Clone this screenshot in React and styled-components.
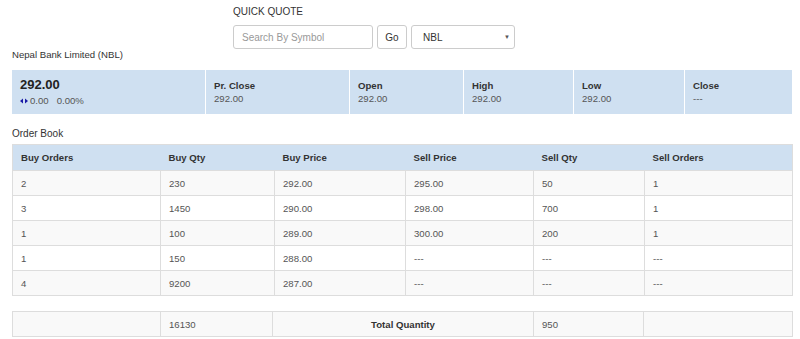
import React from 'react';
import styled, { createGlobalStyle } from 'styled-components';

const GlobalStyle = createGlobalStyle`
  body {
    margin: 0;
    background: #fff;
    font-family: "Liberation Sans", Arial, sans-serif;
    color: #333;
  }
`;

const Page = styled.div`
  width: 780px;
  padding: 6px 8px 0 12px;
`;

const QuickQuote = styled.div`
  padding-left: 221px;
`;

const QuoteTitle = styled.div`
  font-size: 10px;
  line-height: 12px;
  color: #333;
`;

const QuoteForm = styled.div`
  display: flex;
  gap: 4px;
  margin-top: 7px;
  height: 24px;
`;

const SearchInput = styled.input`
  box-sizing: border-box;
  width: 140px;
  height: 24px;
  border: 1px solid #ccc;
  border-radius: 3px;
  padding: 0 8px;
  font-family: inherit;
  font-size: 10px;
  color: #555;
  outline: none;
  &::placeholder { color: #999; }
`;

const GoButton = styled.button`
  box-sizing: border-box;
  width: 30px;
  height: 24px;
  border: 1px solid #ccc;
  border-radius: 3px;
  background: #fff;
  font-family: inherit;
  font-size: 10px;
  color: #333;
  padding: 0;
`;

const FakeSelect = styled.div`
  box-sizing: border-box;
  width: 104px;
  height: 24px;
  border: 1px solid #ccc;
  border-radius: 3px;
  display: flex;
  align-items: center;
  justify-content: space-between;
  padding: 0 4px 0 11px;
  font-size: 10px;
  color: #333;
`;

const Caret = styled.span`
  font-size: 6px;
  color: #555;
`;

const CompanyName = styled.div`
  font-size: 9.6px;
  line-height: 12px;
  margin-bottom: 9px;
`;

const SummaryBar = styled.div`
  display: flex;
  height: 44px;
  background: #cfe0f1;
`;

const SummaryCell = styled.div`
  box-sizing: border-box;
  width: ${p => p.w}px;
  padding-left: 8px;
  display: flex;
  flex-direction: column;
  justify-content: center;
  & + & { border-left: 1px solid #fff; }
`;

const Price = styled.div`
  font-size: 13px;
  font-weight: bold;
  line-height: 16px;
  color: #222;
`;

const Change = styled.div`
  display: flex;
  align-items: center;
  gap: 2px;
  font-size: 9.6px;
  line-height: 14px;
  color: #555;
  margin-top: 1px;
`;

const Label = styled.div`
  font-size: 9.6px;
  font-weight: bold;
  line-height: 13px;
  color: #333;
`;

const Value = styled.div`
  font-size: 9.6px;
  line-height: 13px;
  color: #555;
`;

const SectionTitle = styled.div`
  font-size: 10px;
  line-height: 14px;
  margin-top: 13px;
  margin-bottom: 3px;
`;

const Table = styled.table`
  width: 780px;
  border-collapse: collapse;
  table-layout: fixed;
  border: 1px solid #ddd;
  margin-top: ${p => p.mt || 0}px;
  font-size: 9.6px;
  color: #555;
`;

const Th = styled.th`
  background: #cfe0f1;
  height: 25px;
  padding: 0 8px;
  text-align: left;
  font-weight: bold;
  color: #333;
`;

const Row = styled.tr`
  background: ${p => (p.striped ? '#f9f9f9' : '#fff')};
`;

const Td = styled.td`
  height: 24px;
  padding: 0 8px;
  border: 1px solid #ddd;
  text-align: ${p => (p.center ? 'center' : 'left')};
  font-weight: ${p => (p.bold ? 'bold' : 'normal')};
  color: ${p => (p.bold ? '#333' : '#555')};
`;

const ArrowIcon = () => (
  <svg width="8" height="6" viewBox="0 0 8 6">
    <polygon points="0,3 3,0.5 3,5.5" fill="#1a1aa6" />
    <polygon points="8,3 5,0.5 5,5.5" fill="#1a1aa6" />
  </svg>
);

const stats = [
  { label: 'Pr. Close', value: '292.00', w: 144 },
  { label: 'Open', value: '292.00', w: 114 },
  { label: 'High', value: '292.00', w: 110 },
  { label: 'Low', value: '292.00', w: 111 },
  { label: 'Close', value: '---', w: 108 },
];

const columns = [
  ['Buy Orders', 148],
  ['Buy Qty', 114],
  ['Buy Price', 131],
  ['Sell Price', 128],
  ['Sell Qty', 111],
  ['Sell Orders', 148],
];

const orders = [
  ['2', '230', '292.00', '295.00', '50', '1'],
  ['3', '1450', '290.00', '298.00', '700', '1'],
  ['1', '100', '289.00', '300.00', '200', '1'],
  ['1', '150', '288.00', '---', '---', '---'],
  ['4', '9200', '287.00', '---', '---', '---'],
];

export default function App() {
  return (
    <Page>
      <GlobalStyle />
      <QuickQuote>
        <QuoteTitle>QUICK QUOTE</QuoteTitle>
        <QuoteForm>
          <SearchInput placeholder="Search By Symbol" />
          <GoButton>Go</GoButton>
          <FakeSelect>
            NBL <Caret>▼</Caret>
          </FakeSelect>
        </QuoteForm>
      </QuickQuote>

      <CompanyName>Nepal Bank Limited (NBL)</CompanyName>

      <SummaryBar>
        <SummaryCell w={193}>
          <Price>292.00</Price>
          <Change>
            <ArrowIcon />
            <span>0.00&nbsp;&nbsp;&nbsp;0.00%</span>
          </Change>
        </SummaryCell>
        {stats.map(s => (
          <SummaryCell key={s.label} w={s.w}>
            <Label>{s.label}</Label>
            <Value>{s.value}</Value>
          </SummaryCell>
        ))}
      </SummaryBar>

      <SectionTitle>Order Book</SectionTitle>

      <Table>
        <colgroup>
          {columns.map(([name, w]) => <col key={name} style={{ width: w }} />)}
        </colgroup>
        <thead>
          <tr>
            {columns.map(([name]) => <Th key={name}>{name}</Th>)}
          </tr>
        </thead>
        <tbody>
          {orders.map((row, i) => (
            <Row key={i} striped={i % 2 === 0}>
              {row.map((cell, j) => <Td key={j}>{cell}</Td>)}
            </Row>
          ))}
        </tbody>
      </Table>

      <Table mt={15}>
        <colgroup>
          <col style={{ width: 148 }} />
          <col style={{ width: 112 }} />
          <col style={{ width: 261 }} />
          <col style={{ width: 110 }} />
          <col style={{ width: 149 }} />
        </colgroup>
        <tbody>
          <Row striped>
            <Td></Td>
            <Td>16130</Td>
            <Td center bold>Total Quantity</Td>
            <Td>950</Td>
            <Td></Td>
          </Row>
        </tbody>
      </Table>
    </Page>
  );
}
